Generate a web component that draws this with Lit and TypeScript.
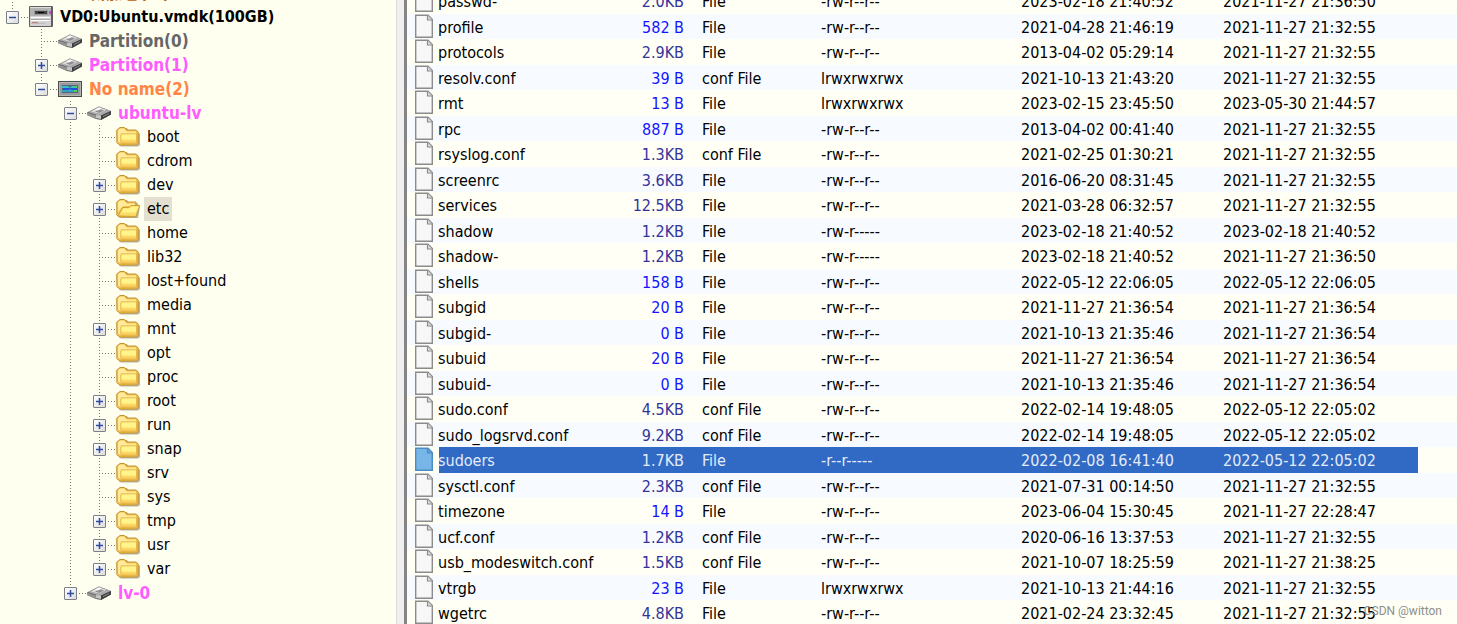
import { LitElement, html, svg, css } from "lit";
import { customElement, property } from "lit/decorators.js";
import { classMap } from "lit/directives/class-map.js";

type IconName = "server" | "disk" | "volume" | "folder" | "open";
type Node = { text: string; icon: IconName; tone?: string; toggle?: "+" | "-"; selected?: boolean; nested?: boolean; children?: Node[] };

const dir = (text: string, toggle?: "+" | "-", icon: IconName = "folder"): Node => ({ text, icon, toggle, selected: icon === "open" });

const tree: Node[] = [
  { text: "新加卷(F:)", icon: "disk", tone: "brown", toggle: "+", nested: true },
  {
    text: "VD0:Ubuntu.vmdk(100GB)", icon: "server", tone: "black", toggle: "-",
    children: [
      { text: "Partition(0)", icon: "disk", tone: "gray" },
      { text: "Partition(1)", icon: "disk", tone: "pink", toggle: "+" },
      {
        text: "No name(2)", icon: "volume", tone: "orange", toggle: "-",
        children: [
          {
            text: "ubuntu-lv", icon: "disk", tone: "pink", toggle: "-",
            children: [
              dir("boot"), dir("cdrom"), dir("dev", "+"), dir("etc", "+", "open"), dir("home"), dir("lib32"),
              dir("lost+found"), dir("media"), dir("mnt", "+"), dir("opt"), dir("proc"), dir("root", "+"),
              dir("run", "+"), dir("snap", "+"), dir("srv"), dir("sys"), dir("tmp", "+"), dir("usr", "+"), dir("var", "+"),
            ],
          },
          { text: "lv-0", icon: "disk", tone: "pink", toggle: "+" },
        ],
      },
    ],
  },
];

const RW = "-rw-r--r--";
const files: string[][] = [
  ["passwd-", "2.0KB", "File", RW, "2023-02-18 21:40:52", "2021-11-27 21:36:50"],
  ["profile", "582 B", "File", RW, "2021-04-28 21:46:19", "2021-11-27 21:32:55"],
  ["protocols", "2.9KB", "File", RW, "2013-04-02 05:29:14", "2021-11-27 21:32:55"],
  ["resolv.conf", "39 B", "conf File", "lrwxrwxrwx", "2021-10-13 21:43:20", "2021-11-27 21:32:55"],
  ["rmt", "13 B", "File", "lrwxrwxrwx", "2023-02-15 23:45:50", "2023-05-30 21:44:57"],
  ["rpc", "887 B", "File", RW, "2013-04-02 00:41:40", "2021-11-27 21:32:55"],
  ["rsyslog.conf", "1.3KB", "conf File", RW, "2021-02-25 01:30:21", "2021-11-27 21:32:55"],
  ["screenrc", "3.6KB", "File", RW, "2016-06-20 08:31:45", "2021-11-27 21:32:55"],
  ["services", "12.5KB", "File", RW, "2021-03-28 06:32:57", "2021-11-27 21:32:55"],
  ["shadow", "1.2KB", "File", "-rw-r-----", "2023-02-18 21:40:52", "2023-02-18 21:40:52"],
  ["shadow-", "1.2KB", "File", "-rw-r-----", "2023-02-18 21:40:52", "2021-11-27 21:36:50"],
  ["shells", "158 B", "File", RW, "2022-05-12 22:06:05", "2022-05-12 22:06:05"],
  ["subgid", "20 B", "File", RW, "2021-11-27 21:36:54", "2021-11-27 21:36:54"],
  ["subgid-", "0 B", "File", RW, "2021-10-13 21:35:46", "2021-11-27 21:36:54"],
  ["subuid", "20 B", "File", RW, "2021-11-27 21:36:54", "2021-11-27 21:36:54"],
  ["subuid-", "0 B", "File", RW, "2021-10-13 21:35:46", "2021-11-27 21:36:54"],
  ["sudo.conf", "4.5KB", "conf File", RW, "2022-02-14 19:48:05", "2022-05-12 22:05:02"],
  ["sudo_logsrvd.conf", "9.2KB", "conf File", RW, "2022-02-14 19:48:05", "2022-05-12 22:05:02"],
  ["sudoers", "1.7KB", "File", "-r--r-----", "2022-02-08 16:41:40", "2022-05-12 22:05:02"],
  ["sysctl.conf", "2.3KB", "conf File", RW, "2021-07-31 00:14:50", "2021-11-27 21:32:55"],
  ["timezone", "14 B", "File", RW, "2023-06-04 15:30:45", "2021-11-27 22:28:47"],
  ["ucf.conf", "1.2KB", "conf File", RW, "2020-06-16 13:37:53", "2021-11-27 21:32:55"],
  ["usb_modeswitch.conf", "1.5KB", "conf File", RW, "2021-10-07 18:25:59", "2021-11-27 21:38:25"],
  ["vtrgb", "23 B", "File", "lrwxrwxrwx", "2021-10-13 21:44:16", "2021-11-27 21:32:55"],
  ["wgetrc", "4.8KB", "File", RW, "2021-02-24 23:32:45", "2021-11-27 21:32:55"],
];

const shapes = {
  server: svg`
    <rect x="0" y="1" width="24" height="21" rx="1" fill="#5f5f5f"/>
    <rect x="1" y="2" width="21" height="9" fill="#b4b4b4"/>
    <rect x="1" y="11" width="21" height="10" fill="#d4d2d2"/>
    <rect x="1" y="2" width="21" height="1" fill="#dedede"/>
    <rect x="5" y="5" width="14" height="5" fill="#999"/>
    <rect x="6" y="6" width="12" height="3" fill="#444"/>
    <rect x="9" y="7" width="6" height="1" fill="#000"/>
    <rect x="20" y="6" width="2" height="3" fill="#b94fc2"/>
    <rect x="2" y="12" width="19" height="1" fill="#fff"/>
    <rect x="2" y="14" width="19" height="1" fill="#aaa"/>
    <rect x="2" y="15" width="19" height="1" fill="#fff"/>
    <rect x="2" y="18" width="14" height="1" fill="#bdbdbd"/>
    <rect x="3" y="17" width="6" height="1" fill="#c98080"/>`,
  disk: svg`
    <path d="M0 11.500 L12 5.500 L24 10 V13.500 L14 19 L9 18 L0 14 Z" fill="#666"/>
    <path d="M1 11 L12 5.500 L24 10 L13 15 Z" fill="#a9a9a9"/>
    <path d="M4 10.500 L12 6.500 L19 9 L12 12.500 Z" fill="#dedede"/>
    <path d="M8 10.500 L13 8 L17 9.500 L12 12 Z" fill="#8e8e8e"/>
    <path d="M8 8.500 L12 6.500 L15 7.500 L11 9.500 Z" fill="#fafafa"/>
    <path d="M0 11.500 L9 14.500 V18 L0 14 Z" fill="#939393"/>
    <path d="M14 14.500 L24 10 V13.500 L14 19 Z" fill="#424242"/>
    <path d="M16 15 L22 12 V13 L16 16 Z" fill="#8a8a8a"/>
    <path d="M9 14 L14 14.500 V18 L9 17 Z" fill="#c6c6c6"/>`,
  volume: svg`
    <rect x="0" y="4" width="24" height="16" fill="#4c4c4c"/>
    <rect x="1" y="5" width="22" height="14" fill="#b4b4b4"/>
    <rect x="2" y="6" width="20" height="12" fill="#9a9a9a"/>
    <rect x="4" y="8" width="16" height="8" fill="#59647c"/>
    <path d="M4 9H10L12 11L14 9H19V11H14L12 12L10 11H4Z" fill="#35c0d0"/>
    <rect x="5" y="11" width="14" height="2" fill="#234fd8"/>
    <path d="M4 13H10L12 12L14 13H19V15H4Z" fill="#2f9fc4"/>
    <rect x="16" y="9" width="3" height="2" fill="#46d464"/>
    <rect x="16" y="13" width="3" height="2" fill="#46d464"/>`,
  folder: svg`
    <path d="M3 5 L6 3 H11 L13 6 H21 L24 9 V20 L22 21.500 H5 L3 20 Z" fill="#8d8a78" opacity=".65"/>
    <path d="M.8 5 L4 2.500 H8.500 L11 5 H20 L22.200 7 V18 L20.500 20 H3.500 L.8 17.500 Z" fill="#f3c24c" stroke="#c4932a"/>
    <path d="M2 5 L4.500 3.500 H8 L10.500 6.500 H20 V8.500 H6 L4.500 10 V18 L2 16.500 Z" fill="#ffeb9a"/>
    <path d="M5 9 H20.500 V18.500 H5 Z" fill="#fddb68" stroke="#dfae45" stroke-width=".7"/>
    <path d="M5.500 9.500 H20 V14.500 H5.500 Z" fill="#fff58a"/>
    <path d="M6 16.500 H20 V18 H6 Z" fill="#f6c455"/>`,
  open: svg`
    <path d="M3 5 L6 3 H11 L13 6 H21 L24 9 L22 21 H5 L3 20 Z" fill="#8d8a78" opacity=".65"/>
    <path d="M.8 5 L4 2.500 H8.500 L11 5 H20 V18 L19 20 H3 L.8 18 Z" fill="#f3c24c" stroke="#c4932a"/>
    <path d="M2 5 L4.500 3.500 H8 L10.500 6.500 H19 V9 H7 L2 15 Z" fill="#ffeb9a"/>
    <path d="M2 19 L6.500 10.500 H13 L15 8.500 H23.500 L20 19.500 Z" fill="#fddb68" stroke="#cf9f35"/>
    <path d="M5.500 15.500 L8 11.500 H14 L16 9.500 H22.500 L20 15.500 Z" fill="#fff58a"/>`,
};

@customElement("tree-branch")
class TreeBranch extends LitElement {
  @property({ attribute: false }) nodes: Node[] = [];

  static styles = css`
    :host { display: block; }
    ul { list-style: none; margin: 0; padding: 0; }
    .child, .nested .row { padding-left: 29px; }
    .node { background: repeating-linear-gradient(to bottom, #77776e 0 1px, transparent 1px 3px) 6px 0 / 1px 100% no-repeat; }
    .node:last-child { background-size: 1px 12px; }
    .row { display: flex; align-items: center; height: 24px; white-space: nowrap; }
    .toggle { box-sizing: border-box; width: 13px; height: 13px; flex: none; margin: 0; padding: 1px; border: 1px solid #7d8088; border-radius: 1px; background: linear-gradient(135deg, #fff, #dcdcdc); display: block; }
    .toggle svg { display: block; width: 9px; height: 9px; }
    .gap { width: 13px; height: 1px; flex: none; background: repeating-linear-gradient(to right, #77776e 0 1px, transparent 1px 3px) 6px 0 / 7px 1px no-repeat; }
    .stub { width: 9px; height: 1px; flex: none; margin-right: 1px; background: repeating-linear-gradient(to right, transparent 0 2px, #77776e 2px 3px); }
    .icon { width: 26px; height: 24px; flex: none; }
    .label { line-height: 24px; padding: 0 3px; margin-left: 2px; color: #000; }
    .strong { font-size: 17px; font-weight: bold; }
    .selected { background: #e3e0d0; }
    .gray { color: #666; }
    .pink { color: #ff5cff; }
    .orange { color: #ff8446; }
    .brown { color: #c0600c; }
    .black { color: #000; font-size: 16px; }
  `;

  private item(n: Node) {
    return html`<li class=${classMap({ node: true, nested: !!n.nested })}>
      <div class="row">
        ${n.toggle
          ? html`<button class="toggle" aria-label=${(n.toggle === "+" ? "Expand " : "Collapse ") + n.text}>
              <svg viewBox="0 0 9 9"><path d=${n.toggle === "+" ? "M1 4.500H8M4.500 1V8" : "M1 4.500H8"} stroke="#2f4c9f" stroke-width="1.500"/></svg>
            </button>`
          : html`<span class="gap"></span>`}
        <span class="stub"></span>
        <svg class="icon" viewBox="0 0 26 24" aria-hidden="true">${shapes[n.icon]}</svg>
        <span class=${classMap({ label: true, strong: !!n.tone, selected: !!n.selected, [n.tone ?? "plain"]: true })}>${n.text}</span>
      </div>
      ${n.children ? html`<tree-branch class="child" .nodes=${n.children}></tree-branch>` : ""}
    </li>`;
  }

  render() {
    return html`<ul>${this.nodes.map((n) => this.item(n))}</ul>`;
  }
}

@customElement("app-root")
class AppRoot extends LitElement {
  static styles = css`
    :host { display: flex; position: relative; height: 100vh; overflow: hidden; background: #fffff0; color: #000; font: 16px "DejaVu Sans Condensed", "Noto Sans CJK SC", sans-serif; }
    .side { flex: none; width: 396px; overflow: hidden; }
    .side tree-branch { margin: -19px 0 0 6px; }
    .split { flex: none; box-sizing: border-box; width: 11px; background: #f0f0f0; border-left: 1px solid #dcdcd8; border-right: 3px solid #858585; }
    .list { flex: 1; min-width: 0; overflow: hidden; background: #fffff5; }
    table { width: 100%; margin-top: -12px; border-collapse: collapse; table-layout: fixed; }
    .row { height: 26px; }
    .row:nth-child(even) { height: 25px; background: #f7fbff; }
    td { padding: 2px 0 0; line-height: 23px; vertical-align: top; white-space: nowrap; }
    .c-name { width: 198px; }
    .c-size { width: 79px; }
    .c-type { width: 137px; }
    .c-mode { width: 200px; }
    .c-date { width: 202px; }
    .c-last { width: 195px; }
    .name { display: flex; align-items: flex-start; height: 23px; }
    .file { display: block; flex: none; width: 18px; height: 24px; margin: -2px 5px 0 8px; }
    .size { text-align: right; color: #33339c; }
    .bytes { color: #1414ff; }
    .type { padding-left: 18px; }
    .chosen td { background: #316ac5; color: #e4ecf8; }
    .chosen .first { background: linear-gradient(to right, transparent 32px, #316ac5 32px); }
    .chosen .rest { background: transparent; }
    .mark { position: absolute; right: 15px; bottom: 5px; font: 12px/16px Roboto, sans-serif; color: #8f8f8a; }
  `;

  private row(f: string[]) {
    const on = f[0] === "sudoers";
    const edge = on ? "#4a8cc4" : "#8c8c8c";
    return html`<tr class=${classMap({ row: true, chosen: on })}>
      <td class="first"><div class="name">
        <svg class="file" viewBox="0 0 18 24" aria-hidden="true">
          <path d="M.7 1.200H13L17.300 5.500V23.300H.7Z" fill=${on ? "#78b6e8" : "#f7f7f8"} stroke=${edge} stroke-width="1.400"/>
          <path d="M12.500 1.500V6H17" fill=${on ? "#5aa0d8" : "#dedede"} stroke=${edge} stroke-width="1.200"/>
        </svg>${f[0]}</div></td>
      <td class=${classMap({ size: true, bytes: f[1].endsWith(" B") })}>${f[1]}</td>
      <td class="type">${f[2]}</td><td>${f[3]}</td><td>${f[4]}</td><td>${f[5]}</td><td class="rest"></td>
    </tr>`;
  }

  render() {
    return html`
      <nav class="side" aria-label="Volumes"><tree-branch .nodes=${tree}></tree-branch></nav>
      <div class="split"></div>
      <main class="list">
        <table>
          <colgroup><col class="c-name"><col class="c-size"><col class="c-type"><col class="c-mode"><col class="c-date"><col class="c-last"><col></colgroup>
          <tbody>${files.map((f) => this.row(f))}</tbody>
        </table>
      </main>
      <span class="mark">CSDN @witton</span>`;
  }
}
